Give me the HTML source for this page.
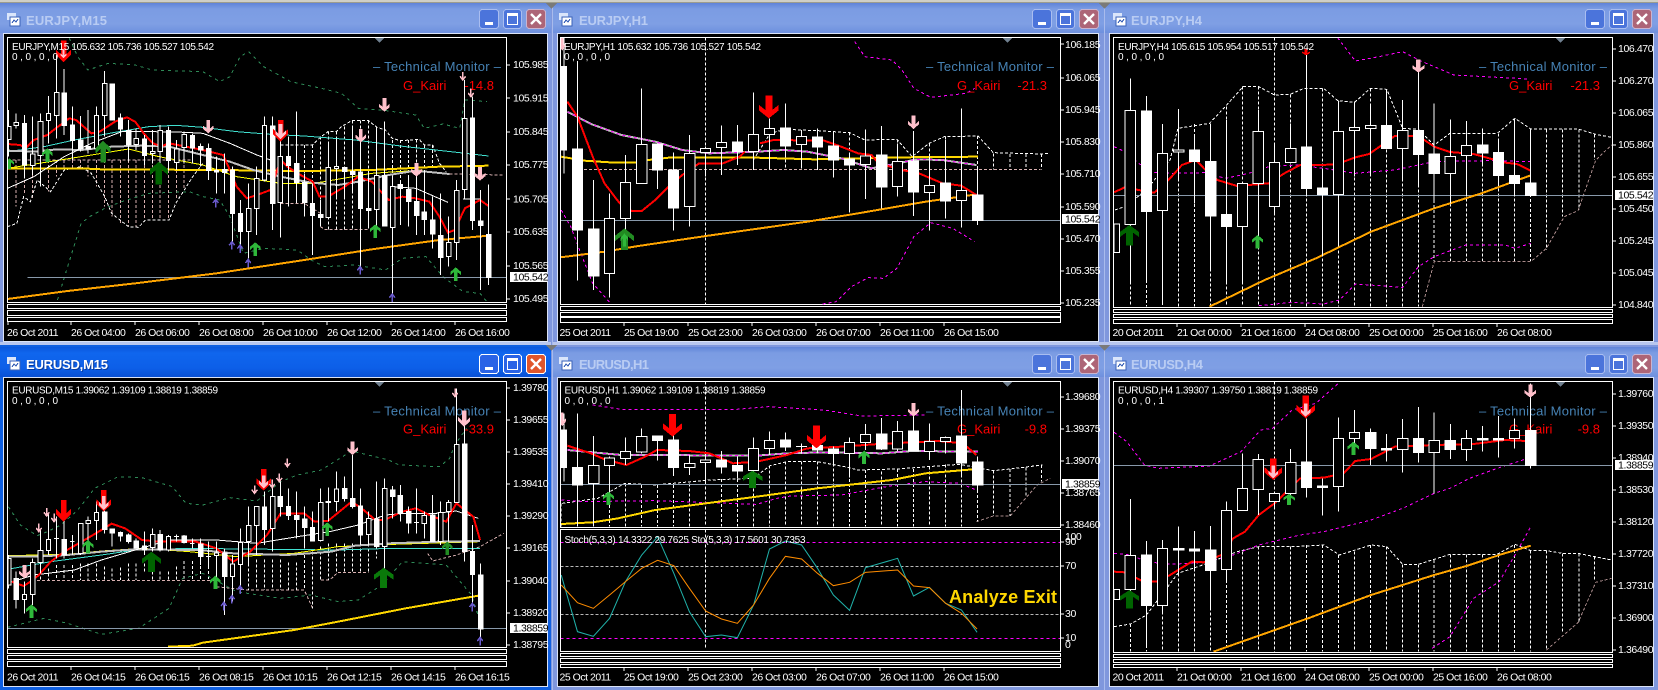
<!DOCTYPE html>
<html lang="en"><head><meta charset="utf-8"><title>Charts</title>
<style>
html,body{margin:0;padding:0;background:#7f97dd;width:1658px;height:690px;overflow:hidden}
svg{display:block;font-family:"Liberation Sans",sans-serif}
svg *{vector-effect:non-scaling-stroke;shape-rendering:crispEdges}
text{shape-rendering:auto}
.w{stroke:#fff;fill:none;stroke-width:1}
.f{fill:#fff;stroke:#fff;stroke-width:1}
.h{fill:#000;stroke:#fff;stroke-width:1}
.d{stroke:#fff;fill:none;stroke-width:1;stroke-dasharray:3 2}
.g{stroke:#2e8b57;fill:none;stroke-width:1;stroke-dasharray:3 4}
.m{stroke:#f0f;fill:none;stroke-width:1;stroke-dasharray:3 3}
.p{stroke:#d8b0b0;fill:none;stroke-width:1;stroke-dasharray:3 2}
.q{stroke:#a98a8a;fill:none;stroke-width:1;stroke-dasharray:3 2}
.n{fill:none}
.l text{fill:#fff;font-size:10.5px;letter-spacing:-.4px}
.tm text{fill:#fff;font-size:10.5px;letter-spacing:-.48px}
.o text{fill:#fff;font-size:10px}
.bx{fill:#fff}
.bt{fill:#000;font-size:10.5px;letter-spacing:-.4px}
.tt{font-size:13px;font-weight:bold;fill:#b9ccf3;letter-spacing:0}
.tm2{font-size:13px;fill:#4682b4}
.gk{font-size:13px;fill:#f00}
.s{fill:none;stroke:#fff;stroke-width:1}
</style></head><body>
<svg width="1658" height="690" viewBox="0 0 1658 690" xmlns="http://www.w3.org/2000/svg">
<defs>
<linearGradient id="ti" x1="0" y1="0" x2="0" y2="1"><stop offset="0" stop-color="#5f83d8"/><stop offset=".2" stop-color="#7b9ce3"/><stop offset=".7" stop-color="#7f9fe4"/><stop offset="1" stop-color="#6e90de"/></linearGradient>
<linearGradient id="ta" x1="0" y1="0" x2="0" y2="1"><stop offset="0" stop-color="#0a56dc"/><stop offset=".2" stop-color="#0f66ee"/><stop offset=".7" stop-color="#0d5fe8"/><stop offset="1" stop-color="#0850d4"/></linearGradient>
<path id="a" d="M0 0L-22-22V-38L-8-24V-65H8V-24L22-38V-22Z"/>
<path id="t" d="M0 0V-24M-8-11L0 0L8-11" fill="none" stroke-width="1.5"/>
<g id="ic"><rect x="0" y="0" width="9" height="7" fill="#dbe6fb"/><rect x="3" y="4" width="10" height="9" fill="#fff" stroke="#3a62b8"/><path d="M5 10l2-3 2 2 2-3" stroke="#3a62b8" fill="none"/></g>
<g id="bi"><rect x="479.5" y="9.5" width="19" height="19" rx="3" fill="#4b74db" stroke="#a9bdf0"/><rect x="485" y="22" width="8" height="3" fill="#fff"/><rect x="503.5" y="9.5" width="18" height="19" rx="3" fill="#4b74db" stroke="#a9bdf0"/><rect x="507.5" y="13.5" width="10" height="11" fill="none" stroke="#fff"/><rect x="507" y="13" width="11" height="3" fill="#fff"/><rect x="526.5" y="9.5" width="19" height="19" rx="3" fill="#ad6577" stroke="#c9b4d0"/><path d="M531 14L541 24M541 14L531 24" stroke="#fff" stroke-width="2.4" style="shape-rendering:auto"/></g>
<g id="ba"><rect x="479.5" y="9.5" width="19" height="19" rx="3" fill="#2a63e6" stroke="#fff"/><rect x="485" y="22" width="8" height="3" fill="#fff"/><rect x="503.5" y="9.5" width="18" height="19" rx="3" fill="#2a63e6" stroke="#fff"/><rect x="507.5" y="13.5" width="10" height="11" fill="none" stroke="#fff"/><rect x="507" y="13" width="11" height="3" fill="#fff"/><rect x="526.5" y="9.5" width="19" height="19" rx="3" fill="#e0562c" stroke="#fff"/><path d="M531 14L541 24M541 14L531 24" stroke="#fff" stroke-width="2.4" style="shape-rendering:auto"/></g>
<clipPath id="c1"><rect x="8" y="38" width="498" height="264"/></clipPath>
<clipPath id="c2"><rect x="561" y="38" width="499" height="267"/></clipPath>
<clipPath id="c3"><rect x="1114" y="38" width="498" height="269"/></clipPath>
<clipPath id="c4"><rect x="8" y="382" width="498" height="265"/></clipPath>
<clipPath id="c5"><rect x="561" y="382" width="499" height="145"/></clipPath>
<clipPath id="c5b"><rect x="561" y="530" width="499" height="121"/></clipPath>
<clipPath id="c6"><rect x="1114" y="382" width="498" height="270"/></clipPath>
</defs>

<rect width="1658" height="690" fill="#7f97dd"/>
<rect width="1658" height="2" fill="#cfcfc6"/><rect y="2" width="1658" height="1" fill="#9c9c8e"/>
<!-- active window frame -->
<rect x="0" y="345" width="551" height="345" fill="#0f5fe0"/>
<rect x="552" y="3" width="1" height="687" fill="#a9bbec"/><rect x="1104" y="3" width="1" height="687" fill="#a9bbec"/>
<!-- title bars -->
<rect x="0" y="3" width="551" height="30" fill="url(#ti)"/><rect x="553" y="3" width="551" height="30" fill="url(#ti)"/><rect x="1105" y="3" width="553" height="30" fill="url(#ti)"/>
<rect x="0" y="347" width="551" height="30" fill="url(#ta)"/><rect x="553" y="347" width="551" height="30" fill="url(#ti)"/><rect x="1105" y="347" width="553" height="30" fill="url(#ti)"/>
<rect y="342" width="551" height="3" fill="#b8c6ee"/><rect x="553" y="342" width="1105" height="3" fill="#b8c6ee"/>
<path d="M546 3h11l-5.500 6zM1099 3h11l-5.500 6zM546 345h11l-5.500 6zM1099 345h11l-5.500 6z" fill="#7a7a78"/>

<use href="#ic" transform="translate(7,13)"/><use href="#ic" transform="translate(559,13)"/><use href="#ic" transform="translate(1113,13)"/>
<use href="#ic" transform="translate(7,357)"/><use href="#ic" transform="translate(559,357)"/><use href="#ic" transform="translate(1113,357)"/>
<text class="tt" x="26" y="25" textLength="81">EURJPY,M15</text><text class="tt" x="579" y="25" textLength="69">EURJPY,H1</text><text class="tt" x="1131" y="25" textLength="71">EURJPY,H4</text>
<text class="tt" x="27" y="370" textLength="82" style="fill:#0a3a9a">EURUSD,M15</text><text class="tt" x="26" y="369" textLength="82" style="fill:#fff">EURUSD,M15</text><text class="tt" x="579" y="369" textLength="70">EURUSD,H1</text><text class="tt" x="1131" y="369" textLength="72">EURUSD,H4</text>
<use href="#bi"/><use href="#bi" x="553"/><use href="#bi" x="1106"/>
<use href="#ba" y="345"/><use href="#bi" x="553" y="345"/><use href="#bi" x="1106" y="345"/>

<!-- client areas -->
<g fill="#000" stroke="#dbe3f6">
<rect x="3.500" y="33.500" width="544" height="308"/><rect x="557.500" y="33.500" width="541" height="308"/><rect x="1109.500" y="33.500" width="544" height="308"/>
<rect x="3.500" y="377.500" width="544" height="309"/><rect x="557.500" y="377.500" width="541" height="309"/><rect x="1109.500" y="377.500" width="544" height="309"/>
</g>
<!-- chart boxes and strips -->
<g class="s">
<rect x="7.500" y="37.500" width="499" height="265"/><rect x="560.500" y="37.500" width="500" height="267"/><rect x="1113.500" y="37.500" width="499" height="270"/>
<rect x="7.500" y="304.500" width="499" height="4"/><rect x="7.500" y="310.500" width="499" height="5"/><rect x="7.500" y="317.500" width="499" height="4"/>
<rect x="560.500" y="306.500" width="500" height="4"/><rect x="560.500" y="312.500" width="500" height="4"/><rect x="560.500" y="317.500" width="500" height="5"/>
<rect x="1113.500" y="309.500" width="499" height="3"/><rect x="1113.500" y="314.500" width="499" height="3"/><rect x="1113.500" y="319.500" width="499" height="4"/>
<rect x="7.500" y="381.500" width="499" height="266"/><rect x="560.500" y="381.500" width="500" height="146"/><rect x="560.500" y="529.500" width="500" height="122"/><rect x="1113.500" y="381.500" width="499" height="271"/>
<rect x="7.500" y="649.500" width="499" height="4"/><rect x="7.500" y="655.500" width="499" height="4"/><rect x="7.500" y="661.500" width="499" height="5"/>
<rect x="560.500" y="653.500" width="500" height="3"/><rect x="560.500" y="658.500" width="500" height="4"/><rect x="560.500" y="664.500" width="500" height="3"/>
<rect x="1113.500" y="654.500" width="499" height="3"/><rect x="1113.500" y="659.500" width="499" height="3"/><rect x="1113.500" y="664.500" width="499" height="3"/>
</g>
<!-- labels beneath charts -->
<g>
<text class="tm2" x="373" y="71" textLength="128">– Technical  Monitor –</text><text class="tm2" x="926" y="71" textLength="128">– Technical  Monitor –</text><text class="tm2" x="1479" y="71" textLength="128">– Technical  Monitor –</text>
<text class="tm2" x="373" y="415.500" textLength="128">– Technical  Monitor –</text><text class="tm2" x="926" y="415.500" textLength="128">– Technical  Monitor –</text><text class="tm2" x="1479" y="415.500" textLength="128">– Technical  Monitor –</text>
<text class="gk" x="403" y="90">G_Kairi</text><text class="gk" x="957" y="90">G_Kairi</text><text class="gk" x="1509" y="90">G_Kairi</text>
<text class="gk" x="403" y="433.500">G_Kairi</text><text class="gk" x="957" y="433.500">G_Kairi</text><text class="gk" x="1509" y="433.500">G_Kairi</text>
<text class="gk" x="494" y="90" text-anchor="end">-14.8</text><text class="gk" x="1047" y="90" text-anchor="end">-21.3</text><text class="gk" x="1600" y="90" text-anchor="end">-21.3</text>
<text class="gk" x="494" y="433.500" text-anchor="end">-33.9</text><text class="gk" x="1047" y="433.500" text-anchor="end">-9.8</text><text class="gk" x="1600" y="433.500" text-anchor="end">-9.8</text>
</g>

<!-- PANEL 1 EURJPY M15 -->
<g clip-path="url(#c1)"><g transform="scale(.33807,.33333)">
<path class="p" d="M22 480H570M948 680L960 688H1090M830 610H900L948 640M1330 522L1490 525"/>
<path class="p" d="M48 480V620M72 480V580M96 480V600M120 480V550M143 480V575M167 480V530M190 480V510M214 480V505M238 480V505M261 480V530M285 480V560M309 480V620M332 480V650M356 480V670M380 480V680M403 480V680M427 480V660M451 480V660M474 480V660M498 480V660M522 480V600M545 480V570"/>
<path class="d" d="M22 680L50 670L70 590L90 605L110 540L150 575L190 510L240 500L270 520L310 590L330 640L380 680L410 682L430 660L500 660L520 610L570 530L600 490M830 435H924L950 410L970 395H995L1010 380L1040 362H1090L1115 382L1140 390L1160 415L1185 422L1240 418L1255 435H1280L1300 490L1320 515"/>
<path class="d" d="M830 435V610M853 435V610M877 435V610M901 435V610M924 435V610M948 410V680M971 395V688M995 395V688M1019 380V688M1043 362V688M1066 362V688M1090 362V688M1114 382V688M1137 415V680M1161 420V560M1184 420V560M1208 420V560M1232 418V500M1255 435V500M1279 435V500"/>
<path class="g" d="M170 900L200 800L240 670L265 650L310 625L360 605L440 580L560 575L600 590L650 600L680 650L720 760L780 745L880 750L920 780L960 800L1050 795L1140 810L1190 775L1260 770L1310 830L1370 875L1420 880L1440 905M205 115L230 170L260 210L320 190L400 195L450 210L600 215L650 245L680 230L710 170L735 155L780 200L860 245L950 265L1010 280L1060 325L1130 330L1230 345L1255 385L1310 372L1360 385L1375 300L1440 305"/>
<path class="n" stroke="#40e0d0" stroke-width="1" d="M22 455L130 440L220 420L340 397L440 380L520 376L600 382L700 395L800 403L900 408L1050 420L1200 440L1360 458L1445 468"/>
<path class="n" stroke="#ff0" stroke-width="1" d="M22 505L240 470L380 447L470 470L600 495L700 530L830 550L930 550L1100 520L1250 510"/>
<path class="n" stroke="#8899aa" stroke-width="1" d="M82 832H1498"/>
<path class="n" stroke="#ffa500" stroke-width="2" d="M22 897L200 873L400 850L640 820L900 780L1100 748L1300 720L1445 707"/>
<path class="n" stroke="#ffd700" stroke-width="2" d="M22 505L240 505L300 508L640 510L900 513L1100 510L1300 500L1445 497"/>
<path class="n" stroke="#c0c0c0" stroke-width="2" d="M22 452L100 455L170 448L240 450L330 440L420 437L500 440L600 465L680 485L750 510L830 530L920 548L1000 555L1060 545L1150 525L1230 512L1330 522"/>
<path class="n" stroke="#fff" stroke-width="1" d="M22 565L100 530L190 470L270 430L360 395L450 395L550 397L600 400L680 430L760 465L800 480M1160 560L1230 565L1325 607M1370 597H1420"/>
<path class="n" stroke="#f00" stroke-width="2" d="M22 432L60 435L75 445L100 420L140 405L165 385L205 355L225 360L270 400L295 395L340 365L375 352L400 365L425 400L450 428L475 440L500 430L600 450L660 465L680 510L700 560L730 595L760 585L800 570L830 480L850 500L880 520L925 545L945 590L970 590L1020 560L1060 530L1100 545L1150 600L1190 590L1230 595L1270 605L1300 650L1325 698L1345 690L1375 625L1420 600L1445 618"/>
<path class="w" d="M25 330V470M48 340V385M72 345V535M96 350V525M120 340V560M143 288V430M167 155V415M190 207V405M214 320V480M238 348V455M261 330V460M285 320V450M309 213V410M332 250V360M356 340V410M380 360V485M403 385V450M427 405V495M451 390V490M474 375V505M498 380V510M522 420V510M545 395V490M569 400V490M593 430V500M617 430V540M640 470V580M664 460V580M688 500V725M711 600V750M735 550V775M759 500V705M782 350V545M806 350V690M829 410V713M853 410V620M877 335V605M901 520V650M924 550V765M948 600V680M971 430V655M995 415V590M1019 500V590M1043 380V580M1066 400V800M1090 520V680M1114 380V680M1137 365V680M1161 530V890M1184 540V675M1208 530V680M1232 500V705M1255 510V705M1279 590V745M1303 580V825M1327 650V800M1350 540V780M1374 240V595M1397 290V690M1421 570V870M1445 553V855"/>
<path class="h" d="M18 380H32V418H18ZM42 367H54V377H42ZM90 462H103V497H90ZM113 364H127V466H113ZM137 340H150V361H137ZM161 277H174V347H161ZM279 346H292V445H279ZM303 250H316V347H303ZM397 415H410V434H397ZM445 455H458V460H445ZM468 392H481V455H468ZM516 447H529V488H516ZM539 403H552V443H539ZM729 625H742V695H729ZM753 535H766V625H753ZM776 377H789V540H776ZM823 470H836V607H823ZM965 503H978V652H965ZM989 499H1002V506H989ZM1108 526H1121V628H1108ZM1155 560H1168V683H1155ZM1321 727H1334V769H1321ZM1344 571H1357V727H1344ZM1368 356H1381V568H1368Z"/>
<path class="f" d="M66 370H78V495H66ZM184 279H197V377H184ZM208 375H221V422H208ZM232 420H245V447H232ZM255 440H268V447H255ZM326 252H339V360H326ZM350 354H363V387H350ZM374 391H387V435H374ZM421 417H434V467H421ZM492 392H505V482H492ZM563 407H576V444H563ZM587 439H600V450H587ZM611 445H624V512H611ZM634 512H647V516H634ZM658 509H671V517H658ZM682 510H694V640H682ZM705 640H718V695H705ZM800 378H813V611H800ZM847 470H860V497H847ZM871 490H884V548H871ZM895 548H908V608H895ZM918 610H931V647H918ZM942 643H955V653H942ZM1013 502H1026V515H1013ZM1037 515H1050V523H1037ZM1060 516H1073V626H1060ZM1084 625H1097V632H1084ZM1131 526H1144V678H1131ZM1178 553H1191V566H1178ZM1202 568H1215V605H1202ZM1226 604H1239V647H1226ZM1249 636H1262V659H1249ZM1273 660H1286V702H1273ZM1297 706H1310V773H1297ZM1391 354H1404V662H1391ZM1415 663H1428V677H1415ZM1439 703H1452V833H1439Z"/>
<use href="#a" fill="#f00" transform="translate(188,187) scale(1)"/><use href="#a" fill="#ffc0cb" transform="translate(188,175) scale(.4)"/>
<use href="#a" fill="#f00" transform="translate(830,425)"/><use href="#a" fill="#ffc0cb" transform="translate(830,418) scale(.7)"/>
<g fill="#ffc0cb"><use href="#a" transform="translate(616,400) scale(.72,.62)"/><use href="#a" transform="translate(1137,335) scale(.72,.62)"/><use href="#a" transform="translate(1067,427) scale(.72,.62)"/><use href="#a" transform="translate(1232,530) scale(.72,.62)"/><use href="#a" transform="translate(1420,542) scale(.72,.62)"/></g>
<g stroke="#ffc0cb"><use href="#t" transform="translate(1369,240)"/><use href="#t" transform="translate(1393,290)"/></g>
<g fill="#2fb83a"><use href="#a" transform="translate(140,445) scale(.72,-.62)"/><use href="#a" transform="translate(755,727) scale(.72,-.62)"/><use href="#a" transform="translate(1110,673) scale(.72,-.62)"/><use href="#a" transform="translate(1348,802) scale(.72,-.62)"/><use href="#a" transform="translate(28,475) scale(.6,-.5)"/></g>
<use href="#a" fill="#228b22" transform="translate(305,422) scale(1,-1)"/><use href="#a" fill="#006400" transform="translate(470,485) scale(1.2,-1.05)"/>
<g stroke="#6a5acd"><use href="#t" transform="translate(638,598) scale(1,-1)"/><use href="#t" transform="translate(686,725) scale(1,-1)"/><use href="#t" transform="translate(710,735) scale(1,-1)"/><use href="#t" transform="translate(734,778) scale(1,-1)"/><use href="#t" transform="translate(1065,800) scale(1,-1)"/><use href="#t" transform="translate(1160,882) scale(1,-1)"/></g>
</g></g>

<!-- PANEL 2 EURJPY H1 -->
<g clip-path="url(#c2)"><g transform="translate(520,0) scale(.33807,.33333)">
<path class="p" d="M190 508H1540"/>
<path class="d" d="M549 113V965M690 480L740 400L785 388L880 392L975 398L1020 420L1115 418L1160 470L1210 430L1255 410L1355 408L1400 458L1545 462L1568 460M738 385V508M785 388V508M833 390V508M880 392V508M927 395V508M975 398V508M1022 420V508M1069 420V508M1117 418V508M1164 470V508M1211 430V508M1259 410V508M1306 408V508M1354 408V508M1401 460V508M1449 462V508M1496 462V508M1543 462V508"/>
<path class="m" d="M990 125L1020 170L1100 180L1130 210L1165 265L1215 292L1320 280L1345 265M122 630L150 680L180 760L215 850L270 912M895 912L935 905L980 860L1030 833L1075 835L1115 805L1165 710L1215 668L1280 685L1345 725"/>
<path class="n" stroke="#8899aa" d="M120 661H1600"/>
<path class="n" stroke="#ffa500" stroke-width="2" d="M120 772L250 755L350 738L550 708L850 665L1000 640L1200 605L1350 583"/>
<path class="n" stroke="#ffd700" stroke-width="2" d="M122 470L190 482L280 488L345 488L380 480L440 473H700L870 478L1000 475L1130 472L1355 470"/>
<path class="n" stroke="#c0c0c0" stroke-width="2" d="M140 335L210 372L300 405L400 425L480 450L560 460L700 455L780 450L850 455L950 475L1040 505L1120 490L1170 478L1250 480L1350 495"/>
<path class="m" d="M140 335L210 372L300 405L400 425L480 450L560 460L700 455L780 450L850 455L950 475L1040 505L1120 490L1170 478L1250 480L1350 495"/>
<path class="n" stroke="#f00" stroke-width="2" d="M140 305L170 350L215 470L250 550L295 610L330 633H360L400 600L440 560L480 525L530 490H600L650 470L665 455M710 430L750 420L900 422L950 440L1000 460L1040 465L1060 490L1130 510L1180 520L1250 550L1305 557L1350 585"/>
<path class="w" d="M130 110V520M170 183V842M217 540V870M265 580V893M312 465V690M359 265V550M407 430V567M454 457V692M501 405V680M549 440V530M596 376V525M643 375V495M691 277V510M738 355V505M785 310V468M833 390V505M880 385V510M927 395V533M975 460V637M1022 388V597M1069 378V625M1117 430V590M1164 393V648M1211 470V692M1259 420V656M1306 325V682M1354 500V675"/>
<path class="h" d="M250 655H280V820H250ZM297 547H327V656H297ZM344 433H375V551H344ZM486 460H517V620H486ZM534 445H564V457H534ZM581 428H611V443H581ZM676 403H706V455H676ZM723 385H753V404H723ZM818 409H848V434H818ZM1007 468H1037V494H1007ZM1102 484H1132V560H1102ZM1196 556H1226V577H1196ZM1291 571H1321V601H1291Z"/>
<path class="f" d="M122 200H138V450H122ZM155 447H185V690H155ZM202 687H233V828H202ZM392 432H422V510H392ZM439 510H469V624H439ZM628 426H658V454H628ZM770 384H800V438H770ZM865 411H895V441H865ZM912 438H942V480H912ZM960 477H990V495H960ZM1054 465H1085V561H1054ZM1149 483H1179V576H1149ZM1244 549H1274V603H1244ZM1339 585H1369V662H1339Z"/>
<use href="#a" fill="#f00" transform="translate(736,355) scale(1.3,1.05)"/><use href="#a" fill="#ffc0cb" transform="translate(1164,387) scale(.72,.62)"/><use href="#a" fill="#ffc0cb" transform="translate(125,152) scale(.4,.6)"/>
<use href="#a" fill="#228b22" transform="translate(309,685) scale(1.25,-1)"/><use href="#a" fill="#2fb83a" transform="translate(309,700) scale(.5,-.6)"/>
</g></g>

<!-- PANEL 3 EURJPY H4 -->
<g clip-path="url(#c3)"><g transform="translate(1040,0) scale(.39417,.33333)">
<path class="q" d="M970 920L1000 785H1245L1285 745L1330 650L1365 632L1410 480L1450 435"/>
<path class="d" d="M595 113V965M190 630L215 620L270 570L330 480L350 385L430 370L470 320L515 260H555L595 285L635 283L670 265H720L755 302L798 307L838 265L880 268L920 385L960 388L1000 435L1040 400H1160L1205 355L1245 387H1365L1410 403L1450 412"/>
<path class="d" d="M229 620V920M270 570V920M311 530V920M352 385V920M392 372V920M433 370V920M473 320V920M514 260V920M554 260V920M636 283V920M676 265V920M717 265V920M757 302V920M798 307V920M839 265V920M879 268V920M920 385V920M960 388V920M1000 435V783M1041 400V783M1082 400V783M1123 400V783M1163 400V783M1204 355V783M1245 387V783M1285 388V750M1326 388V650M1367 388V630M1407 403V480"/>
<path class="m" d="M755 113L800 183L860 170L920 155L970 185L1050 225L1240 237M555 917L640 907L720 912L760 900L800 852L920 862L960 800L1000 770L1080 735L1180 735L1205 745L1245 730M188 440L215 455L250 490L290 518L340 520L420 518L470 535L530 520L580 500L650 495L720 505L800 520L900 510L1000 485L1060 483L1150 482L1245 485"/>
<path class="n" stroke="#8899aa" d="M186 587H1452"/>
<path class="n" stroke="#ffa500" stroke-width="2" d="M430 920L570 840L700 775L840 695L1000 625L1120 580L1245 526"/>
<path class="n" stroke="#f00" stroke-width="2" d="M188 577L215 562L250 570L290 578L330 535L360 495L395 480L420 510L450 540L500 558L580 550L620 520L660 495L750 494L800 472L835 462L900 408H960L1000 440L1040 456L1100 462L1180 488L1210 492L1245 512"/>
<path class="w" d="M229 235V845M270 288V845M311 372V915M352 327V535M392 405V610M433 370V810M473 360V845M514 545V850M554 330V730M595 430V640M636 370V490M676 160V590M717 510V770M757 302V740M798 305V530M839 310V520M879 270V445M920 300V540M960 215V560M1000 310V600M1041 358V610M1082 363V590M1123 385V500M1163 415V555M1204 360V590M1245 390V590"/>
<path class="h" d="M188 672H202V757H188ZM216 331H242V673H216ZM298 460H324V631H298ZM339 450H365V456H339ZM501 550H527V679H501ZM541 394H567V550H541ZM582 488H608V619H582ZM623 445H649V487H623ZM744 394H770V583H744ZM785 382H811V391H785ZM826 376H852V385H826ZM907 391H933V445H907ZM1028 469H1054V520H1028ZM1069 436H1095V466H1069Z"/>
<path class="f" d="M257 333H283V635H257ZM379 450H405V485H379ZM420 484H446V648H420ZM460 643H486V680H460ZM663 441H689V566H663ZM704 564H730V584H704ZM866 376H892V446H866ZM947 391H973V464H947ZM987 462H1013V521H987ZM1110 435H1136V459H1110ZM1150 457H1176V527H1150ZM1191 526H1217V551H1191ZM1232 549H1258V587H1232Z"/>
<use href="#a" fill="#006400" transform="translate(227,675) scale(1.1,-.95)"/><use href="#a" fill="#2fb83a" transform="translate(552,705) scale(.65,-.62)"/>
<use href="#a" fill="#f00" transform="translate(675,166) scale(.45,.3)"/><use href="#a" fill="#ffc0cb" transform="translate(960,218) scale(.7,.6)"/>
</g></g>

<!-- PANEL 4 EURUSD M15 -->
<g clip-path="url(#c4)"><g transform="translate(0,325) scale(.33807,.33333)">
<path class="p" d="M110 766H640M640 785L735 795H900L925 850M950 765H975L1000 742H1090M1265 685L1280 708L1350 690L1420 665L1490 625"/>
<path class="d" d="M120 740V765M143 730V765M167 720V765M190 720V765M214 720V765M238 715V765M261 715V765M285 715V765M309 725V765M332 730V765M356 728V765M380 715V765M403 715V765M427 715V740M451 740V765M474 740V765M498 740V765M522 725V765M545 708V765M569 708V765M593 708V765M617 708V765M640 708V765M664 708V795M688 720V795M711 780V795M735 700V795M759 703V795M782 703V795M806 703V795M829 703V795M853 712V795M877 712V795M901 690V795M924 680V850M948 665V765M971 655V765M995 655V740M1019 655V740M1043 655V740M1066 655V740M1090 655V740M1114 680V700"/>
<path class="g" d="M25 545L60 600L110 632L140 620L180 600L230 555L280 490L350 455L420 458L510 485L550 535L600 540L680 518L760 528L830 470L880 450L950 435L1040 378L1150 405L1180 420L1300 425L1330 400L1345 360L1380 310M22 907L130 880L200 895L300 928L410 910L500 850L540 760L600 745L700 800L830 820L920 810L1000 830L1060 825L1130 780L1190 710L1320 720L1395 810L1420 890"/>
<path class="n" stroke="#8899aa" d="M22 910H1498"/>
<path class="n" stroke="#40e0d0" d="M22 733L150 710L300 690L400 675L560 670L720 672L1000 675L1160 670H1420"/>
<path class="n" stroke="#ff0" d="M22 692L200 688L300 678L420 670L560 680L700 695L870 685L1000 665L1100 660L1420 650"/>
<path class="n" stroke="#ffd700" stroke-width="2" d="M497 965L570 962L600 953L870 915L1000 890L1200 850L1415 812"/>
<path class="n" stroke="#c0c0c0" stroke-width="2" d="M22 695H100L200 690L300 680L400 673L590 675L690 685L850 690L980 680L1050 662L1150 655L1300 650L1420 648"/>
<path class="n" stroke="#fff" d="M22 775L100 750L220 735L300 705L400 675L500 645H640L760 655L880 635L975 620L1060 600L1140 570L1200 565H1290L1350 558L1415 580"/>
<path class="n" stroke="#f00" stroke-width="2" d="M35 770L70 783L90 770L115 750L150 710L190 680L250 645L300 615L330 596L370 610L420 645L470 650H580L640 670L690 710L740 680L790 630L830 565H900L930 590L970 588L1040 530L1070 550L1110 585H1137L1190 560L1230 550L1270 570L1320 590L1350 535L1400 575L1420 645"/>
<path class="w" d="M25 690V790M48 740V850M72 770V865M96 700V840M120 610V745M143 565V690M167 575V700M190 585V700M214 630V690M238 595V690M261 575V655M285 530V645M309 530V625M332 610V665M356 620V650M380 625V655M403 640V670M427 620V690M451 610V680M474 615V680M498 630V680M522 628V650M545 630V655M569 640V670M593 640V720M617 650V730M640 650V760M664 670V870M688 690V830M711 610V780M735 545V720M759 570V690M782 500V660M806 470V680M829 470V575M853 490V585M877 500V640M901 545V670M924 560V650M948 490V650M971 487V590M995 440V560M1019 454V530M1043 390V550M1066 490V660M1090 560V660M1114 470V670M1137 460V730M1161 483V580M1184 480V590M1208 545V625M1232 490V625M1255 560V640M1279 510V650M1303 530V660M1327 525V650M1350 190V530M1374 260V710M1397 600V850M1421 715V940M160 640H174M207 650H221M515 635H529M562 655H576M610 695H624M1225 593H1239"/>
<path class="h" d="M23 700H32V780H23ZM66 808H78V823H66ZM90 713H103V808H90ZM113 677H127V712H113ZM137 643H150V677H137ZM232 596H245V685H232ZM255 586H268V595H255ZM279 562H292V586H279ZM445 628H458V668H445ZM492 635H505V675H492ZM634 684H647V691H634ZM682 717H694V755H682ZM705 653H718V718H705ZM729 601H742V650H729ZM753 544H766V601H753ZM800 514H813V610H800ZM942 532H955V647H942ZM965 530H978V532H965ZM989 492H1002V529H989ZM1084 580H1097V628H1084ZM1131 490H1144V664H1131ZM1249 572H1262V595H1249ZM1297 562H1310V650H1297ZM1321 532H1334V560H1321ZM1344 358H1357V532H1344Z"/>
<path class="f" d="M42 760H54V824H42ZM184 643H197V690H184ZM303 561H316V614H303ZM326 612H339V624H326ZM350 622H363V633H350ZM374 630H387V650H374ZM397 648H410V669H397ZM421 663H434V675H421ZM468 628H481V675H468ZM539 633H552V653H539ZM587 657H600V695H587ZM658 684H671V755H658ZM776 546H789V614H776ZM823 514H836V545H823ZM847 544H860V572H847ZM871 571H884V584H871ZM895 582H908V608H895ZM918 607H931V648H918ZM1013 490H1026V521H1013ZM1037 520H1050V544H1037ZM1060 543H1073V630H1060ZM1108 582H1121V664H1108ZM1155 495H1168V515H1155ZM1178 511H1191V565H1178ZM1202 559H1215V594H1202ZM1273 570H1286V650H1273ZM1368 357H1381V680H1368ZM1391 679H1404V748H1391ZM1415 750H1428V912H1415Z"/>
<use href="#a" fill="#f00" transform="translate(188,590)"/>
<use href="#a" fill="#f00" transform="translate(307,560)"/><use href="#a" fill="#ffc0cb" transform="translate(307,555) scale(.65)"/>
<use href="#a" fill="#f00" transform="translate(780,497)"/><use href="#a" fill="#ffc0cb" transform="translate(780,490) scale(.6)"/>
<g fill="#ffc0cb"><use href="#a" transform="translate(72,760) scale(.75,.62)"/><use href="#a" transform="translate(1043,390) scale(.72,.62)"/><use href="#a" transform="translate(1373,305) scale(.8,.75)"/></g>
<g stroke="#ffc0cb"><use href="#t" transform="translate(115,620)"/><use href="#t" transform="translate(138,573)"/><use href="#t" transform="translate(160,590)"/><use href="#t" transform="translate(753,505)"/><use href="#t" transform="translate(826,470)"/><use href="#t" transform="translate(850,425)"/><use href="#t" transform="translate(805,488)"/><use href="#t" transform="translate(1346,215)"/></g>
<g fill="#2fb83a"><use href="#a" transform="translate(93,838) scale(.72,-.62)"/><use href="#a" transform="translate(260,645) scale(.72,-.62)"/><use href="#a" transform="translate(637,752) scale(.72,-.62)"/><use href="#a" transform="translate(968,592) scale(.72,-.62)"/></g>
<use href="#a" fill="#228b22" transform="translate(1323,650) scale(.72,-.62)"/>
<use href="#a" fill="#006400" transform="translate(448,680) scale(1.25,-.95)"/><use href="#a" fill="#0a7a0a" transform="translate(1135,728) scale(1.3,-.95)"/>
<g stroke="#6a5acd"><use href="#t" transform="translate(662,832) scale(1,-1)"/><use href="#t" transform="translate(686,812) scale(1,-1)"/><use href="#t" transform="translate(710,783) scale(1,-1)"/><use href="#t" transform="translate(1397,835) scale(1,-1)"/><use href="#t" transform="translate(1420,937) scale(1,-1)"/></g>
</g></g>

<!-- PANEL 5 EURUSD H1 -->
<g clip-path="url(#c5)"><g transform="translate(520,325) scale(.33807,.33333)">
<path class="q" d="M1350 590L1400 573H1450L1530 480L1568 460"/>
<path class="d" d="M125 535L230 520L310 475L400 480L560 465L690 460L740 422L790 410H880L960 425L1000 435L1115 432L1300 418L1400 437L1450 432L1545 420M265 495V605M312 475V605M359 480V605M406 480V605M454 480V605M501 475V605M549 170V605M596 462V605M643 462V605M691 460V605M738 422V605M785 410V605M833 410V605M880 410V605M927 415V605M975 432V605M1022 435V605M1069 440V605M1117 432V605M1164 432V605M1211 425V605M1259 418V605M1306 418V605M1354 420V590M1401 437V573M1449 432V573M1496 428V515M1543 420V470M122 535V605"/>
<path class="m" d="M215 240L300 253H640L735 245L900 255L1010 273L1200 270M122 525L180 530L400 527L560 533L700 538L760 520L800 513L950 510L1100 482L1200 470L1300 475L1350 495"/>
<path class="n" stroke="#8899aa" d="M120 479H1600"/>
<path class="n" stroke="#ffd700" stroke-width="2" d="M122 597L215 592L290 580L400 555L550 535L700 515L880 490L1100 465L1200 445L1340 433"/>
<path class="n" stroke="#c0c0c0" stroke-width="2" d="M140 375L300 390H380L700 392L790 385L900 382L1070 385L1160 378L1355 380"/>
<path class="m" d="M140 375L300 390H380L700 392L790 385L900 382L1070 385L1160 378L1355 380"/>
<path class="n" stroke="#f00" stroke-width="2" d="M140 362L210 385L250 403L315 420L370 395L405 375L500 378L560 385L630 415L700 410L790 390L850 370L950 365L1060 357L1240 348L1310 355L1350 390"/>
<path class="w" d="M130 265V470M170 265V605M217 333V605M265 395V500M312 337V420M359 310V385M407 335V407M454 300V453M501 390V450M549 388V470M596 378V445M643 395V460M691 337V440M738 320V390M785 322V378M833 355V385M880 360V385M927 365V415M975 338V458M1022 297V375M1069 279V375M1117 288V380M1164 260V380M1211 295V405M1259 335V385M1306 195V450M1354 395V495M817 365H849"/>
<path class="h" d="M202 421H233V476H202ZM250 399H280V421H250ZM297 380H327V400H297ZM344 334H375V381H344ZM486 415H517V428H486ZM534 405H564V412H534ZM676 370H706V437H676ZM723 346H753V371H723ZM960 352H990V386H960ZM1007 329H1037V353H1007ZM1102 319H1132V372H1102ZM1196 350H1226V380H1196ZM1244 337H1274V350H1244Z"/>
<path class="f" d="M122 315H138V428H122ZM155 427H185V480H155ZM392 333H422V347H392ZM439 345H469V428H439ZM581 405H611V426H581ZM628 422H658V438H628ZM770 345H800V366H770ZM865 362H895V375H865ZM912 372H942V386H912ZM1054 327H1085V372H1054ZM1149 318H1179V378H1149ZM1291 333H1321V414H1291ZM1339 411H1369V480H1339Z"/>
<use href="#a" fill="#f00" transform="translate(451,335) scale(1.25,1.05)"/><use href="#a" fill="#f00" transform="translate(877,370) scale(1.25,1.05)"/>
<use href="#a" fill="#ffc0cb" transform="translate(1164,275) scale(.72,.62)"/><use href="#a" fill="#ffc0cb" transform="translate(125,303) scale(.5,.62)"/>
<g fill="#2fb83a"><use href="#a" transform="translate(262,500) scale(.75,-.62)"/><use href="#a" transform="translate(1018,377) scale(.75,-.62)"/></g>
<use href="#a" fill="#0a7a0a" transform="translate(688,437) scale(1.3,-.8)"/>
</g></g>
<g clip-path="url(#c5b)"><g transform="translate(520,325) scale(.33807,.33333)">
<path class="m" d="M120 652H1600M120 940H1600"/>
<path class="d" style="stroke:#b8b8b8" d="M120 724H1600M120 868H1600"/>
<path class="d" d="M549 613V970"/>
<path class="n" stroke="#20b2aa" style="shape-rendering:auto" d="M122 750L170 920L217 934L265 880L312 770L360 690L407 635L455 745L501 860L549 935L596 930L643 938L691 840L738 672L785 648L833 660L880 730L927 810L975 856L1022 728L1117 700L1164 813L1211 787L1259 835L1306 855L1352 922"/>
<path class="n" stroke="#ff8c00" style="shape-rendering:auto" d="M122 780L170 833L217 850L265 810L312 770L360 730L407 706L455 722L501 790L549 858L596 882L643 895L691 840L738 760L785 694L833 702L880 745L927 782L975 772L1022 742L1117 735L1164 783L1211 788L1259 835L1306 865L1352 912"/>
</g></g>
<text x="949" y="603" font-size="18" font-weight="bold" fill="#ffd700" textLength="108">Analyze Exit</text>

<!-- PANEL 6 EURUSD H4 -->
<g clip-path="url(#c6)"><g transform="translate(1040,325) scale(.39417,.33333)">
<path class="q" d="M1285 975L1365 893L1410 772L1450 760"/>
<path class="d" d="M595 170V985M188 905L230 897L270 870L350 745L430 713L500 680L555 665H640L720 660L760 690L840 660L880 665L920 718H960L1040 688H1160L1205 658L1245 677H1285L1325 685H1365L1450 705"/>
<path class="d" d="M229 897V980M270 870V980M311 860V980M352 745V980M392 715V980M433 713V980M473 690V980M514 680V980M554 665V980M636 665V980M676 660V980M717 660V980M757 690V980M798 680V980M839 660V980M879 665V980M920 718V980M960 718V980M1000 705V980M1041 688V980M1082 688V980M1123 688V980M1163 688V980M1204 660V980M1245 677V980M1285 677V975M1326 685V920M1367 685V890M1407 695V770"/>
<path class="m" d="M188 322L220 350L265 420L300 430L430 423L510 380L560 315L590 310L640 255L700 235L760 172M188 685L230 690L270 710L330 718L420 712L490 690L555 660L660 630L720 620L840 585L920 550L1000 505L1040 490L1090 460L1160 430L1230 403M995 970L1040 935L1100 820L1165 770L1210 680L1245 605"/>
<path class="n" stroke="#8899aa" d="M186 422H1452"/>
<path class="n" stroke="#ffa500" stroke-width="2" d="M440 980L680 880L840 810L1000 750L1085 722L1170 688L1245 662"/>
<path class="n" stroke="#f00" stroke-width="2" d="M188 740L215 742L260 768L295 770L330 750L385 710L415 712L460 690L490 640L520 620L555 570L595 535L635 490L660 460L720 458L770 445L800 408L840 402L900 365L1000 360L1100 357L1180 345L1235 348"/>
<path class="w" d="M229 522V835M270 648V965M311 645V860M352 605V745M392 618V730M433 603V850M473 530V770M514 385V555M554 387V570M595 500V550M636 372V540M676 280V518M717 460V572M757 277V560M798 255V360M839 310V420M879 327V410M920 282V443M960 246V413M1000 262V505M1041 297V402M1082 315V408M1123 303V380M1163 273V398M1204 280V370M1245 175V430"/>
<path class="h" d="M188 794H202V823H188ZM216 691H242V794H216ZM298 670H324V842H298ZM460 556H486V733H460ZM501 490H527V556H501ZM541 403H567V493H541ZM582 505H608V530H582ZM623 412H649V506H623ZM744 341H770V484H744ZM785 322H811V340H785ZM907 341H933V373H907ZM987 347H1013V382H987ZM1069 341H1095V373H1069ZM1191 317H1217V341H1191Z"/>
<path class="f" d="M257 690H283V842H257ZM339 670H365V675H339ZM379 672H405V678H379ZM420 675H446V737H420ZM663 411H689V488H663ZM704 483H730V488H704ZM826 322H852V371H826ZM866 370H892V375H866ZM947 340H973V383H947ZM1028 346H1054V374H1028ZM1110 340H1136V345H1110ZM1150 340H1176V345H1150ZM1232 316H1258V422H1232Z"/>
<use href="#a" fill="#f00" transform="translate(674,280) scale(1.05)"/><use href="#a" fill="#ffc0cb" transform="translate(674,275) scale(.55,.6)"/>
<use href="#a" fill="#f00" transform="translate(592,465)"/><use href="#a" fill="#ffc0cb" transform="translate(592,460) scale(.55,.6)"/>
<use href="#a" fill="#ffc0cb" transform="translate(1244,218) scale(.65,.6)"/>
<g fill="#2fb83a"><use href="#a" transform="translate(632,507) scale(.65,-.5)"/><use href="#a" transform="translate(795,350) scale(.65,-.62)"/></g>
<use href="#a" fill="#006400" transform="translate(227,795) scale(1.1,-.85)"/>
</g></g>

<!-- top triangles on charts -->
<path d="M375 38h9l-4.500 5zM1003 38h9l-4.500 5zM1556 38h9l-4.500 5zM375 382h9l-4.500 5zM1003 382h9l-4.500 5zM1556 382h9l-4.500 5z" fill="#708090"/>

<!-- OHLC text -->
<g class="o">
<text x="12" y="50" textLength="202">EURJPY,M15  105.632 105.736 105.527 105.542</text><text x="12" y="60" textLength="46">0 , 0 , 0 , 0</text>
<text x="564" y="50" textLength="197">EURJPY,H1  105.632 105.736 105.527 105.542</text><text x="564" y="60" textLength="46">0 , 0 , 0 , 0</text>
<text x="1118" y="50" textLength="196">EURJPY,H4  105.615 105.954 105.517 105.542</text><text x="1118" y="60" textLength="46">0 , 0 , 0 , 0</text>
<text x="12" y="393.500" textLength="206">EURUSD,M15  1.39062 1.39109 1.38819 1.38859</text><text x="12" y="404" textLength="46">0 , 0 , 0 , 0</text>
<text x="564.500" y="393.500" textLength="201">EURUSD,H1  1.39062 1.39109 1.38819 1.38859</text><text x="564.500" y="404" textLength="46">0 , 0 , 0 , 0</text>
<text x="1118" y="393.500" textLength="200">EURUSD,H4  1.39307 1.39750 1.38819 1.38859</text><text x="1118" y="404" textLength="46">0 , 0 , 0 , 1</text>
<text x="564.500" y="543" textLength="241">Stoch(5,3,3) 14.3322 29.7625  Sto(5,3,3) 17.5601 30.7353</text>
</g>

<!-- ticks -->
<path stroke="#fff" fill="none" d="M507 65h3M507 98h3M507 132h3M507 165h3M507 199h3M507 232h3M507 266h3M507 299h3M1061 44h3M1061 78h3M1061 110h3M1061 142h3M1061 174h3M1061 207h3M1061 239h3M1061 271h3M1061 303h3M1613 49h3M1613 81h3M1613 113h3M1613 145h3M1613 177h3M1613 209h3M1613 241h3M1613 273h3M1613 305h3M507 388h3M507 420h3M507 452h3M507 484h3M507 516h3M507 548h3M507 581h3M507 613h3M507 645h3M1061 397h3M1061 429h3M1061 461h3M1061 493h3M1061 525h3M1061 542h3M1061 566h3M1061 614h3M1061 638h3M1613 394h3M1613 426h3M1613 458h3M1613 490h3M1613 522h3M1613 554h3M1613 586h3M1613 618h3M1613 650h3"/>
<path stroke="#fff" fill="none" d="M71 322v3M135 322v3M199 322v3M263 322v3M327 322v3M391 322v3M455 322v3M8 322v3M624 323v3M688 323v3M752 323v3M816 323v3M880 323v3M944 323v3M1177 324v3M1241 324v3M1305 324v3M1369 324v3M1433 324v3M1497 324v3M71 667v3M135 667v3M199 667v3M263 667v3M327 667v3M391 667v3M455 667v3M624 668v3M688 668v3M752 668v3M816 668v3M880 668v3M944 668v3M1177 668v3M1241 668v3M1305 668v3M1369 668v3M1433 668v3M1497 668v3"/>

<!-- price axes -->
<g class="l">
<text x="513" y="68">105.985</text><text x="513" y="101.500">105.915</text><text x="513" y="135">105.845</text><text x="513" y="168">105.775</text><text x="513" y="202.500">105.705</text><text x="513" y="235">105.635</text><text x="513" y="269">105.565</text><text x="513" y="302">105.495</text>
<text x="1065" y="48">106.185</text><text x="1065" y="81">106.065</text><text x="1065" y="113">105.945</text><text x="1065" y="145">105.830</text><text x="1065" y="177">105.710</text><text x="1065" y="210">105.590</text><text x="1065" y="242">105.470</text><text x="1065" y="274">105.355</text><text x="1065" y="306">105.235</text>
<text x="1618" y="52">106.470</text><text x="1618" y="84">106.270</text><text x="1618" y="116">106.065</text><text x="1618" y="148">105.860</text><text x="1618" y="180">105.655</text><text x="1618" y="212">105.450</text><text x="1618" y="244">105.245</text><text x="1618" y="276">105.045</text><text x="1618" y="308">104.840</text>
<text x="513" y="391">1.39780</text><text x="513" y="423">1.39655</text><text x="513" y="455">1.39535</text><text x="513" y="487">1.39410</text><text x="513" y="519">1.39290</text><text x="513" y="551">1.39165</text><text x="513" y="584">1.39040</text><text x="513" y="616">1.38920</text><text x="513" y="648">1.38795</text>
<text x="1065" y="400">1.39680</text><text x="1065" y="432">1.39375</text><text x="1065" y="464">1.39070</text><text x="1065" y="496">1.38765</text><text x="1065" y="528">1.38460</text>
<text x="1065" y="540">100</text><text x="1065" y="545">90</text><text x="1065" y="569">70</text><text x="1065" y="617">30</text><text x="1065" y="641">10</text><text x="1065" y="648">0</text>
<text x="1618" y="397">1.39760</text><text x="1618" y="429">1.39350</text><text x="1618" y="461">1.38940</text><text x="1618" y="493">1.38530</text><text x="1618" y="525">1.38120</text><text x="1618" y="557">1.37720</text><text x="1618" y="589">1.37310</text><text x="1618" y="621">1.36900</text><text x="1618" y="653">1.36490</text>
</g>
<g>
<rect class="bx" x="510" y="272" width="37" height="10"/><text class="bt" x="513" y="280.500">105.542</text>
<rect class="bx" x="1062" y="214" width="37" height="10"/><text class="bt" x="1065" y="222.500">105.542</text>
<rect class="bx" x="1615" y="190" width="38" height="10"/><text class="bt" x="1618" y="198.500">105.542</text>
<rect class="bx" x="510" y="623" width="37" height="10"/><text class="bt" x="513" y="631.500">1.38859</text>
<rect class="bx" x="1062" y="479" width="37" height="10"/><text class="bt" x="1065" y="487.500">1.38859</text>
<rect class="bx" x="1615" y="460" width="38" height="10"/><text class="bt" x="1618" y="468.500">1.38859</text>
</g>

<!-- time axes -->
<g class="tm">
<text x="7" y="336">26 Oct 2011</text><text x="71" y="336">26 Oct 04:00</text><text x="135" y="336">26 Oct 06:00</text><text x="199" y="336">26 Oct 08:00</text><text x="263" y="336">26 Oct 10:00</text><text x="327" y="336">26 Oct 12:00</text><text x="391" y="336">26 Oct 14:00</text><text x="455" y="336">26 Oct 16:00</text>
<text x="559.500" y="336">25 Oct 2011</text><text x="624" y="336">25 Oct 19:00</text><text x="688" y="336">25 Oct 23:00</text><text x="752" y="336">26 Oct 03:00</text><text x="816" y="336">26 Oct 07:00</text><text x="880" y="336">26 Oct 11:00</text><text x="944" y="336">26 Oct 15:00</text>
<text x="1112.500" y="336">20 Oct 2011</text><text x="1177" y="336">21 Oct 00:00</text><text x="1241" y="336">21 Oct 16:00</text><text x="1305" y="336">24 Oct 08:00</text><text x="1369" y="336">25 Oct 00:00</text><text x="1433" y="336">25 Oct 16:00</text><text x="1497" y="336">26 Oct 08:00</text>
<text x="7" y="680.500">26 Oct 2011</text><text x="71" y="680.500">26 Oct 04:15</text><text x="135" y="680.500">26 Oct 06:15</text><text x="199" y="680.500">26 Oct 08:15</text><text x="263" y="680.500">26 Oct 10:15</text><text x="327" y="680.500">26 Oct 12:15</text><text x="391" y="680.500">26 Oct 14:15</text><text x="455" y="680.500">26 Oct 16:15</text>
<text x="559.500" y="680.500">25 Oct 2011</text><text x="624" y="680.500">25 Oct 19:00</text><text x="688" y="680.500">25 Oct 23:00</text><text x="752" y="680.500">26 Oct 03:00</text><text x="816" y="680.500">26 Oct 07:00</text><text x="880" y="680.500">26 Oct 11:00</text><text x="944" y="680.500">26 Oct 15:00</text>
<text x="1112.500" y="680.500">20 Oct 2011</text><text x="1177" y="680.500">21 Oct 00:00</text><text x="1241" y="680.500">21 Oct 16:00</text><text x="1305" y="680.500">24 Oct 08:00</text><text x="1369" y="680.500">25 Oct 00:00</text><text x="1433" y="680.500">25 Oct 16:00</text><text x="1497" y="680.500">26 Oct 08:00</text>
</g>
</svg>
</body></html>
